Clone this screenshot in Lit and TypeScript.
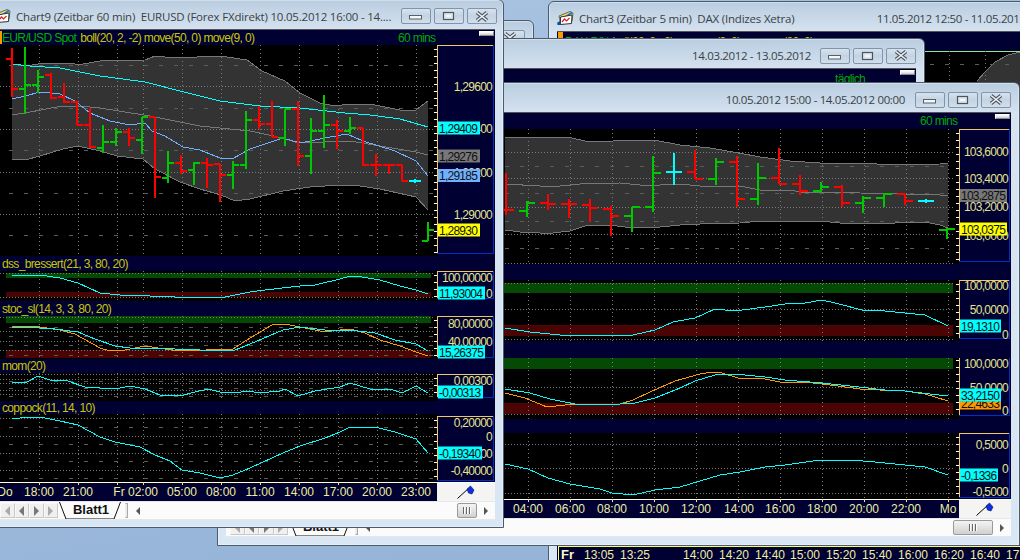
import { LitElement, css, html, svg } from 'lit';
import { customElement } from 'lit/decorators.js';

type Pt = [number, number];
type Bar = [number, number, number, number, number, string?];
type Label = [string, number, string?, number?];

interface Series {
  color: string;
  pts: Pt[];
}

interface Pane {
  top: number;
  bottom: number;
  strip: number;
  title?: unknown;
  box: Pt;
  bands?: [number, number, string][];
  dots?: number[];
  dashes?: number[];
  area?: { up: Pt[]; down: Pt[]; mid: Pt[] };
  lines?: Series[];
  bars?: Bar[];
  labels?: Label[];
}

interface Chart {
  x0: number;
  plotW: number;
  axisW: number;
  textRight: number;
  tick: number;
  grid: number[];
  times: [string, number][];
  axisH: number;
  panes: Pane[];
}

const R = '#ff0000';
const G = '#00c800';
const C = '#00ffff';
const CYAN = '#00ffff';
const ORANGE = '#ff9900';
const BLUE = '#70b0ff';

const pts = (list: Pt[]) => list.map((p) => p.join(',')).join(' ');

const eurBars: Bar[] = [
  [12, 47, 96, 58, 88, R], [25, 46, 113, 88, 84, G], [38, 69, 92, 84, 76, G], [51, 72, 98, 74, 97, R],
  [64, 82, 102, 96, 101, R], [77, 100, 124, 101, 124, R], [90, 107, 147, 124, 146, R], [103, 124, 152, 147, 141, G],
  [116, 127, 145, 141, 131, G], [129, 127, 145, 131, 137, R], [142, 116, 153, 139, 116, G], [155, 116, 197, 116, 176, R],
  [168, 150, 182, 177, 162, G], [181, 154, 173, 162, 170, R], [194, 161, 184, 169, 162, G], [207, 157, 187, 162, 164, R],
  [220, 163, 201, 163, 174, R], [233, 160, 188, 174, 164, G], [246, 110, 168, 164, 119, G], [259, 105, 128, 119, 123, R],
  [272, 100, 136, 123, 136, R], [285, 108, 145, 137, 108, G], [298, 100, 165, 108, 155, R], [311, 117, 173, 155, 130, G],
  [324, 94, 147, 130, 124, G], [337, 119, 148, 124, 130, R], [350, 116, 133, 130, 127, G], [363, 127, 165, 127, 164, R],
  [376, 153, 175, 164, 164, R], [389, 163, 173, 164, 164, R], [402, 164, 180, 164, 180, R], [415, 178, 182, 180, 180, C],
  [428, 221, 240, 240, 229, G],
];

const daxBars: Bar[] = [
  [506, 173, 215, 210, 210, R], [527, 201, 217, 211, 203, G], [548, 194, 210, 203, 204, R], [569, 199, 218, 204, 204, R],
  [590, 199, 222, 205, 208, R], [611, 206, 236, 209, 216, R], [632, 207, 232, 216, 207, G], [653, 156, 212, 207, 173, G],
  [674, 153, 185, 172, 172, C], [695, 150, 179, 172, 179, R], [716, 158, 185, 179, 162, G], [737, 156, 207, 162, 199, R],
  [758, 163, 205, 199, 178, G], [779, 148, 184, 178, 184, R], [800, 175, 195, 184, 191, R], [821, 182, 193, 191, 187, G],
  [842, 185, 207, 187, 203, R], [863, 196, 213, 203, 198, G], [884, 194, 207, 198, 194, G], [905, 194, 205, 194, 201, R],
  [926, 199, 203, 201, 201, C], [947, 228, 239, 230, 229, G],
];

const chart9: Chart = {
  x0: 0,
  plotW: 437,
  axisW: 58,
  textRight: 55,
  tick: 6,
  grid: [39, 78, 117, 143, 182, 221, 260, 299, 338, 377, 416],
  times: [['Do', 5], ['18:00', 39], ['21:00', 78], ['Fr', 119], ['02:00', 143], ['05:00', 182], ['08:00', 221], ['11:00', 260], ['14:00', 299], ['17:00', 338], ['20:00', 377], ['23:00', 416]],
  axisH: 19,
  panes: [
    {
      top: 44, bottom: 255, strip: 0, box: [44, 253],
      dots: [85, 128, 171, 213], dashes: [64, 107, 149, 192, 234],
      area: {
        up: [[12, 63], [25, 65], [45, 62], [72, 62], [78, 64], [100, 60], [145, 59], [155, 55], [175, 57], [220, 55], [247, 59], [262, 70], [285, 80], [300, 92], [320, 102], [335, 105], [350, 103], [375, 104], [400, 109], [416, 109], [428, 100]],
        down: [[12, 158], [25, 159], [40, 155], [63, 148], [78, 145], [100, 150], [117, 155], [143, 158], [155, 168], [180, 181], [200, 188], [221, 194], [235, 200], [250, 198], [283, 190], [310, 186], [340, 184], [360, 185], [380, 188], [416, 196], [428, 209]],
        mid: [[12, 114], [25, 112], [62, 105], [80, 105], [100, 107], [150, 115], [200, 125], [250, 130], [283, 137], [298, 142], [350, 140], [380, 145], [416, 151], [428, 154]],
      },
      lines: [
        { color: CYAN, pts: [[12, 63], [30, 65], [60, 67], [100, 75], [145, 81], [180, 90], [220, 100], [260, 105], [300, 107], [345, 112], [370, 114], [400, 118], [428, 126]] },
        { color: BLUE, pts: [[12, 98], [25, 95], [40, 91], [60, 93], [75, 100], [90, 112], [110, 120], [130, 124], [145, 122], [152, 130], [165, 135], [183, 146], [200, 149], [220, 157], [232, 158], [250, 148], [283, 137], [300, 142], [325, 137], [347, 133], [363, 140], [395, 150], [416, 160], [428, 175]] },
      ],
      bars: eurBars,
      labels: [['1,29600', 85], ['1,29400', 127], ['1,29200', 171], ['1,29000', 213], ['1,29409', 127, CYAN, 42], ['1,29276', 155, '#777777', 42], ['1,29185', 174.5, BLUE, 42], ['1,28930', 229, '#ffff00', 42]],
    },
    {
      top: 270, bottom: 300, strip: 15, title: 'dss_bressert(21, 3, 80, 20)', box: [270, 298],
      bands: [[272, 5, '#044a04'], [291, 5, '#4a0404']], dots: [272, 296],
      lines: [{ color: CYAN, pts: [[12, 274], [20, 275], [40, 274], [60, 277], [78, 282], [100, 292], [120, 294], [150, 295], [175, 296], [225, 296], [240, 293], [250, 291], [265, 289], [300, 285], [315, 284], [340, 278], [350, 275], [356, 275], [380, 279], [400, 285], [416, 289], [428, 293]] }],
      labels: [['100,00000', 276], ['0', 292], ['11,93004', 292, CYAN, 47]],
    },
    {
      top: 315, bottom: 358, strip: 15, title: 'stoc_sl(14, 3, 3, 80, 20)', box: [315, 357],
      bands: [[315, 7, '#044a04'], [349, 8, '#4a0404']], dots: [316, 330, 340, 349], dashes: [326, 335, 344, 354],
      lines: [
        { color: ORANGE, pts: [[12, 326], [20, 325], [40, 326], [60, 329], [75, 333], [100, 347], [110, 350], [125, 349], [145, 345], [165, 348], [180, 350], [233, 348], [250, 337], [272, 324], [285, 323], [300, 326], [325, 331], [340, 329], [350, 328], [365, 332], [380, 339], [400, 345], [416, 351], [428, 355]] },
        { color: CYAN, pts: [[12, 327], [30, 326], [40, 327], [55, 328], [78, 331], [95, 338], [115, 345], [130, 347], [150, 347], [175, 348], [200, 349], [235, 349], [250, 343], [283, 329], [300, 326], [325, 329], [350, 329], [375, 332], [395, 339], [416, 343], [428, 350]] },
      ],
      labels: [['80,00000', 322], ['40,00000', 340], ['15,26375', 351, CYAN, 47]],
    },
    {
      top: 372, bottom: 400, strip: 14, title: 'mom(20)', box: [373, 397],
      dots: [373, 378, 382, 389, 393], dashes: [380, 387, 395],
      lines: [{ color: CYAN, pts: [[12, 382], [27, 381], [38, 375], [50, 379], [65, 379], [85, 386], [115, 388], [130, 385], [145, 388], [160, 394], [180, 395], [195, 391], [208, 388], [220, 391], [233, 392], [250, 390], [258, 392], [280, 390], [285, 388], [298, 395], [315, 390], [340, 386], [350, 382], [370, 388], [383, 389], [390, 388], [402, 392], [416, 385], [428, 392]] }],
      labels: [['0,00300', 379], ['-0,00313', 391, CYAN, 45]],
    },
    {
      top: 413, bottom: 481, strip: 13, title: 'coppock(11, 14, 10)', box: [415, 480],
      dots: [417, 435, 452, 469], dashes: [426, 443, 460, 477],
      lines: [{ color: CYAN, pts: [[12, 418], [20, 417], [40, 416], [60, 420], [78, 424], [100, 436], [115, 441], [140, 446], [155, 454], [170, 460], [182, 469], [200, 472], [220, 477], [233, 474], [250, 467], [283, 452], [300, 445], [325, 437], [340, 431], [350, 426], [375, 426], [395, 431], [416, 438], [428, 452]] }],
      labels: [['0,20000', 421], ['0', 435], ['-0,20000', 452], ['-0,40000', 469], ['-0,19340', 452, CYAN, 44]],
    },
  ],
};

const dax: Chart = {
  x0: 226,
  plotW: 733,
  axisW: 52,
  textRight: 49,
  tick: 8,
  grid: [528, 570, 612, 654, 696, 738, 780, 822, 864, 906, 948],
  times: [['04:00', 528], ['06:00', 570], ['08:00', 612], ['10:00', 654], ['12:00', 696], ['14:00', 739], ['16:00', 780], ['18:00', 822], ['20:00', 864], ['22:00', 906], ['Mo', 948]],
  axisH: 19,
  panes: [
    {
      top: 129, bottom: 264, strip: 0, box: [129, 262],
      dots: [152, 178, 207, 234, 263], dashes: [166, 193, 221, 248],
      area: {
        up: [[505, 137], [560, 137], [572, 138], [585, 141], [613, 141], [622, 140], [654, 140], [680, 145], [710, 148], [739, 153], [760, 157], [790, 161], [820, 163], [853, 163], [900, 165], [940, 164], [948, 163]],
        down: [[505, 230], [520, 232], [540, 233], [553, 233], [570, 231], [585, 226], [590, 225], [608, 225], [625, 227], [660, 227], [680, 225], [700, 224], [740, 223], [760, 221], [810, 221], [830, 222], [840, 223], [895, 223], [905, 222], [925, 222], [940, 225], [948, 228]],
        mid: [[505, 184], [540, 186], [560, 186], [580, 184], [620, 183], [640, 185], [660, 185], [680, 184], [700, 186], [740, 186], [760, 190], [790, 190], [800, 192], [820, 192], [860, 193], [900, 194], [940, 195], [948, 196]],
      },
      bars: daxBars,
      labels: [['103,6000', 151], ['103,4000', 178], ['103,2000', 206], ['103,0000', 235], ['103,2875', 195.5, '#777777', 47], ['103,0375', 229, '#ffff00', 47]],
    },
    {
      top: 280, bottom: 341, strip: 16, box: [280, 339],
      bands: [[283, 10, '#044a04'], [325, 11, '#4a0404']], dots: [283, 309, 339],
      lines: [{ color: CYAN, pts: [[505, 328], [530, 332], [560, 335], [633, 335], [655, 330], [673, 322], [695, 318], [715, 309], [735, 311], [765, 307], [785, 304], [805, 303], [822, 300], [835, 303], [862, 310], [885, 311], [905, 313], [925, 315], [948, 326]] }],
      labels: [['100,0000', 285], ['50,0000', 309], ['0', 334], ['19,1310', 326, CYAN, 41]],
    },
    {
      top: 358, bottom: 419, strip: 17, box: [356, 416],
      bands: [[358, 11, '#044a04'], [403, 11, '#4a0404']], dots: [387, 414],
      lines: [
        { color: ORANGE, pts: [[505, 393], [525, 398], [547, 407], [565, 405], [620, 404], [633, 400], [650, 392], [675, 381], [700, 374], [712, 372], [722, 373], [738, 378], [765, 379], [780, 382], [805, 382], [830, 385], [860, 389], [880, 390], [905, 391], [925, 394], [948, 401]] },
        { color: CYAN, pts: [[505, 389], [530, 393], [550, 399], [575, 404], [620, 404], [635, 403], [655, 398], [680, 388], [695, 381], [715, 375], [735, 374], [765, 377], [785, 380], [822, 383], [850, 386], [885, 390], [905, 391], [930, 394], [948, 396]] },
      ],
      labels: [['100,0000', 363], ['50,0000', 387], ['0', 410], ['22,4633', 403, ORANGE, 41], ['33,2150', 395, CYAN, 41]],
    },
    {
      top: 433, bottom: 499, strip: 14, box: [433, 498],
      dots: [444, 468, 493],
      lines: [{ color: CYAN, pts: [[505, 464], [528, 469], [548, 478], [570, 484], [600, 489], [612, 493], [633, 495], [655, 490], [680, 487], [700, 481], [720, 475], [740, 472], [765, 467], [785, 465], [820, 460], [850, 460], [875, 462], [905, 465], [925, 467], [948, 475]] }],
      labels: [['0,5000', 444], ['0', 468], ['-0,5000', 491], ['-0,1336', 475, CYAN, 38]],
    },
  ],
};

@customElement('app-root')
export class AppRoot extends LitElement {
  static override styles = css`
    :host {
      display: block;
      position: relative;
      width: 1020px;
      height: 560px;
      overflow: hidden;
      background:
        linear-gradient(166deg, transparent 0, transparent 93%, rgba(255, 255, 255, 0.18) 94%, transparent 95%),
        linear-gradient(170deg, #a9c3e2 0%, #93b2d6 100%);
      font-family: 'Liberation Sans', Arial, sans-serif;
    }
    svg {
      display: block;
    }
    .win {
      position: absolute;
      box-sizing: border-box;
      padding: 0 8px 8px;
      border: 1px solid #4b5b6c;
      border-radius: 6px 6px 0 0;
      background: linear-gradient(180deg, #b9cde0 0, #d5e2f0 30px, #d9e6f3 100%);
      box-shadow: 0 0 0 1px rgba(255, 255, 255, 0.35) inset;
    }
    .w-back { left: 200px; top: 20px; width: 334px; height: 90px; }
    .w-c3 { left: 548px; top: 1px; width: 520px; height: 600px; }
    .w-2 { left: 217px; top: 38px; width: 708px; height: 90px; }
    .w-dax { left: 217px; top: 82px; width: 803px; height: 464px; }
    .w-eur { left: -9px; top: -1px; width: 513px; height: 529px; }

    .titlebar {
      display: flex;
      align-items: center;
      height: 29px;
      padding-top: 4px;
      box-sizing: border-box;
      font: 11.5px 'Open Sans', 'Noto Sans', sans-serif;
      letter-spacing: -0.2px;
      color: #3a3f46;
      white-space: pre;
    }
    .w-eur .titlebar { padding-top: 3px; }
    .icon { margin-right: 5px; flex: none; }
    .w-eur .icon { margin-left: -6px; }
    .range { margin-left: auto; margin-right: 7px; letter-spacing: -0.35px; }
    .w-c3 .range { margin-right: 3px; }
    .w-2 .range { margin-right: 6px; }
    .btn {
      display: flex;
      flex: none;
      align-items: center;
      justify-content: center;
      box-sizing: border-box;
      width: 30px;
      height: 16px;
      margin-left: 3px;
      border: 1px solid #8294a8;
      border-radius: 2px;
      background: linear-gradient(180deg, #d6e2ee 0, #c4d3e3 50%, #d2deeb 100%);
    }
    .client {
      border-top: 1px solid #555;
      background: #000033;
    }
    .strip {
      position: relative;
      display: flex;
      align-items: center;
      box-sizing: border-box;
      background: #000033;
      padding-left: 2px;
      font-size: 12px;
      letter-spacing: -0.65px;
      color: #c8c800;
      white-space: pre;
    }
    .green { color: #00b000; margin-right: 4px; }
    .marker {
      position: absolute;
      left: 0;
      top: 1px;
      bottom: 1px;
      width: 2px;
      background: #ff9900;
    }
    .mins {
      position: absolute;
      top: 1px;
      color: #00a800;
    }
    .w-eur .mins { left: 398px; }
    .w-dax .mins { left: 694px; }
    .w-2 .mins { left: 609px; top: 3px; }
    .closer {
      position: absolute;
      top: 1px;
      right: 1px;
      width: 15px;
      height: 5px;
      box-sizing: border-box;
      background: linear-gradient(180deg, #fff, #ccc);
      border: 1px solid #888;
      border-top-color: #fff;
      border-left-color: #fff;
    }
    .row {
      display: flex;
    }
    .axis-txt {
      font-size: 12px;
      letter-spacing: -0.75px;
      fill: #e4e48c;
      text-anchor: end;
    }
    .axis-txt.on {
      fill: #101010;
      text-anchor: start;
    }
    .time {
      font-size: 12px;
      fill: #eeeea0;
      text-anchor: middle;
    }
    .time.bold {
      font-size: 13px;
      font-weight: 700;
      fill: #f8f8d0;
      text-anchor: start;
    }
    .flag {
      display: flex;
      align-items: center;
      justify-content: center;
      flex: 1;
      background: #f4f4f2;
      border-top: 1px solid #fff;
    }
    .tabs {
      display: flex;
      align-items: center;
      height: 19px;
      background: #fbfbfb;
      box-sizing: border-box;
      border-top: 1px solid #e8e8e8;
      border-bottom: 1px solid #e4e8ec;
    }
    .w-dax .tabs { padding-left: 4px; }
    .nav {
      display: flex;
      align-items: center;
      justify-content: center;
      width: 14.5px;
      height: 15px;
      box-sizing: border-box;
      border: 1px solid #c8c8c8;
      border-top-color: #f8f8f8;
      border-left-color: #f8f8f8;
      background: #f0f0f0;
    }
    .tab {
      position: relative;
      width: 64px;
      height: 17px;
      margin-left: 1px;
      font-size: 13px;
      font-weight: 700;
      line-height: 16px;
      text-align: center;
      color: #111;
    }
    .tab svg {
      position: absolute;
      left: 0;
      top: 0;
    }
    .tab-end {
      width: 3px;
      height: 15px;
      margin-left: 2px;
      box-sizing: border-box;
      border: 1px solid #aaa;
      border-left-color: #eee;
      background: #e8e8e8;
    }
    .scroll-left { margin-left: 8px; }
    .thumb {
      display: flex;
      align-items: center;
      justify-content: center;
      gap: 1px;
      box-sizing: border-box;
      width: 20px;
      height: 15px;
      margin-left: auto;
      border: 1px solid #9a9a9a;
      border-radius: 2px;
      background: linear-gradient(180deg, #f4f4f4, #d0d0d0);
    }
    .w-dax .thumb { width: 40px; }
    .thumb i {
      display: block;
      width: 1px;
      height: 7px;
      background: #666;
      box-shadow: 1px 0 0 #fff;
      margin-right: 1px;
    }
    .scroll-right { width: 18px; display: flex; justify-content: center; }
    .c3-head {
      height: 19px;
      padding-left: 1px;
      align-items: flex-start;
    }
    .c3-marker {
      width: 5px;
      height: 100%;
      background: #ff9900;
      margin-right: 2px;
    }
    .c3-text { padding-top: 3px; }
  `;

  private renderIcon() {
    return html`<svg class="icon" width="17" height="15" viewBox="0 0 17 15">
      <path d="M2 5 L13 0.5 L16 2 L15 10 L4 13 Z" fill="#f0dc70" stroke="#6b6b3a" />
      <path d="M1 13.5 L4 9 L15 1.5" fill="none" stroke="#1a78d8" stroke-width="2" />
      <path d="M3.5 6 L15 4 L14.5 12.5 L3.5 13.5 Z" fill="#fff" stroke="#333" />
      <path d="M5 11 L7.5 8 L9.5 10 L12.5 7" fill="none" stroke="#e02020" stroke-width="1.2" />
      <rect x="0.5" y="11" width="3.5" height="3" fill="#14508f" />
    </svg>`;
  }

  private renderButtons() {
    return html`
      <div class="btn"><svg width="16" height="8" viewBox="0 0 16 8"><rect x="1.5" y="3.5" width="12" height="3.5" fill="#f4f7fa" stroke="#55606c" /></svg></div>
      <div class="btn"><svg width="14" height="10" viewBox="0 0 14 10"><rect x="1.5" y="1.5" width="10" height="7" fill="#dbe5ef" stroke="#4a5560" stroke-width="1.2" /><rect x="4" y="4" width="5" height="2" fill="#f4f7fa" /></svg></div>
      <div class="btn"><svg width="16" height="11" viewBox="0 0 16 11"><path d="M3 1.5 L13 9.5 M13 1.5 L3 9.5" stroke="#4a5560" stroke-width="3.6" /><path d="M3 1.5 L13 9.5 M13 1.5 L3 9.5" stroke="#f0f4f8" stroke-width="1.6" /></svg></div>
    `;
  }

  private renderPlot(c: Chart, p: Pane) {
    const h = p.bottom - p.top;
    const area = p.area;
    const end = c.x0 + c.plotW;
    return svg`<svg width=${c.plotW} height=${h} viewBox="${c.x0} ${p.top} ${c.plotW} ${h}" shape-rendering="crispEdges">
      <rect x=${c.x0} y=${p.top} width=${c.plotW} height=${h} fill="#000" />
      ${(p.bands ?? []).map(([y, bh, col]) => svg`<rect x=${c.x0 + 6} y=${y} width=${c.plotW - 12} height=${bh} fill=${col} />`)}
      ${area ? svg`<polygon points=${pts([...area.up, ...[...area.down].reverse()])} fill="#333333" />` : ''}
      ${c.grid.map((x) => svg`<line x1=${x + 0.5} x2=${x + 0.5} y1=${p.top} y2=${p.bottom} stroke="#7a7a7a" stroke-dasharray="1 3" />`)}
      ${(p.dots ?? []).map((y) => svg`<line x1=${c.x0} x2=${end - 4} y1=${y + 0.5} y2=${y + 0.5} stroke="#7a7a7a" stroke-dasharray="1 2" />`)}
      ${(p.dashes ?? []).map((y) => svg`<line x1=${c.x0 + 9} x2=${end - 4} y1=${y + 0.5} y2=${y + 0.5} stroke="#5c5c5c" stroke-dasharray="4 11" />`)}
      ${area
        ? svg`<polyline points=${pts(area.up)} fill="none" stroke="#777" /><polyline points=${pts(area.down)} fill="none" stroke="#777" /><polyline points=${pts(area.mid)} fill="none" stroke="#777" />`
        : ''}
      ${(p.lines ?? []).map((l) => svg`<polyline points=${pts(l.pts)} fill="none" stroke=${l.color} />`)}
      ${(p.bars ?? []).map(([x, hi, lo, open, close, col]) => svg`<path d="M${x} ${hi}V${lo}M${x - c.tick} ${open}H${x}M${x} ${close}H${x + c.tick}" fill="none" stroke=${col} stroke-width="2" />`)}
      ${this.renderTicks(end, p)}
    </svg>`;
  }

  private renderTicks(end: number, p: Pane) {
    const ticks: number[] = [];
    for (let y = p.box[0] + 4; y < p.box[1] - 1; y += 7) ticks.push(y);
    return ticks.map((y) => svg`<line x1=${end - 3} x2=${end} y1=${y + 0.5} y2=${y + 0.5} stroke="#fff" />`);
  }

  private renderAxis(c: Chart, p: Pane) {
    const h = p.bottom - p.top;
    const w = c.axisW;
    return svg`<svg width=${w} height=${h} viewBox="0 ${p.top} ${w} ${h}">
      <rect x="0" y=${p.box[0]} width="1" height=${p.box[1] - p.box[0]} fill="#f0c860" />
      <rect x="0" y=${p.box[0]} width=${w - 2} height="1" fill="#f0c860" />
      <rect x="0" y=${p.box[1] - 1} width=${w - 1} height="1" fill="#0030c0" />
      <rect x=${w - 2} y=${p.box[0]} width="1" height=${p.box[1] - p.box[0]} fill="#0030c0" />
      ${(p.labels ?? []).map(([text, y, bg, bw]) =>
        bg
          ? svg`<rect x="1" y=${y - 6.5} width=${bw} height="13" fill=${bg} /><text class="axis-txt on" x="2" y=${y + 4.5}>${text}</text>`
          : svg`<text class="axis-txt" x=${c.textRight} y=${y + 4.5}>${text}</text>`,
      )}
    </svg>`;
  }

  private renderPane(c: Chart, p: Pane) {
    return html`
      ${p.strip ? html`<div class="strip" style="height:${p.strip}px">${p.title ?? ''}</div>` : ''}
      <div class="row">${this.renderPlot(c, p)}${this.renderAxis(c, p)}</div>
    `;
  }

  private renderTimeRow(c: Chart) {
    const w = c.plotW;
    const h = c.axisH;
    return html`<div class="row">
      <svg width=${w} height=${h} viewBox="${c.x0} 0 ${w} ${h}">
        <rect x=${c.x0} y="0" width=${w} height=${h} fill="#000033" />
        <rect x=${c.x0} y="0" width=${w} height="1" fill="#ffffd0" />
        ${c.grid.map((x) => svg`<rect x=${x} y="0" width="1" height="3" fill="#ffe080" />`)}
        ${c.times.map(([t, x]) => svg`<text class="time" x=${x} y="14">${t}</text>`)}
      </svg>
      <div class="flag">
        <svg width="18" height="14" viewBox="0 0 18 14">
          <path d="M0.5 13.5 L12 3" stroke="#000" fill="none" />
          <path d="M10 4 L13.5 1 L17 5 L15 9 L11.5 8 Z" fill="#1030e0" stroke="#00106a" stroke-width="0.6" />
        </svg>
      </div>
    </div>`;
  }

  private renderArrow(dir: 'l' | 'r', color = '#777', size = 5) {
    const d = dir === 'l' ? `M${size} 0 L0 ${size} L${size} ${size * 2} Z` : `M0 0 L${size} ${size} L0 ${size * 2} Z`;
    return html`<svg width=${size} height=${size * 2} viewBox="0 0 ${size} ${size * 2}"><path d=${d} fill=${color} /></svg>`;
  }

  private renderTabs() {
    return html`<div class="tabs">
      <div class="nav">${this.renderArrow('l', '#aaa')}</div>
      <div class="nav">${this.renderArrow('l')}</div>
      <div class="nav">${this.renderArrow('r')}</div>
      <div class="nav">${this.renderArrow('r', '#aaa')}</div>
      <div class="tab">
        <svg width="64" height="17" viewBox="0 0 64 17"><path d="M0.5 0 L7 17 H55 L61.5 0" fill="none" stroke="#111" /></svg>
        Blatt1
      </div>
      <div class="tab-end"></div>
      <div class="scroll-left">${this.renderArrow('l', '#555', 4)}</div>
      <div class="thumb"><i></i><i></i><i></i></div>
      <div class="scroll-right">${this.renderArrow('r', '#555', 4)}</div>
    </div>`;
  }

  private renderChart(c: Chart) {
    return html`${c.panes.map((p) => this.renderPane(c, p))}${this.renderTimeRow(c)}${this.renderTabs()}`;
  }

  private renderChart3() {
    const times: [string, number][] = [['13:05', 599], ['13:25', 635], ['14:00', 698], ['14:20', 734], ['14:40', 770], ['15:00', 805], ['15:20', 841], ['15:40', 877], ['16:00', 913], ['16:20', 949], ['16:40', 985], ['17:00', 1021]];
    const w = 500;
    return html`
      <div class="strip c3-head"><span class="c3-marker"></span><span class="c3-text"><span class="green">DAX P/N</span>boll(20, 2, -2)      move(9, 0)      move(20, 0)</span></div>
      <svg width=${w} height="495" viewBox="557 52 ${w} 495" shape-rendering="crispEdges">
        <rect x="557" y="52" width=${w} height="495" fill="#000" />
        <rect x="557" y="52" width=${w} height="1" fill="#90e890" />
        <path d="M977 82 L985 73 L995 63 L1008 56 L1020 53 V100 H977 Z" fill="#333" />
        <path d="M977 82 L985 73 L995 63 L1008 56 L1020 53" fill="none" stroke="#777" />
        ${[949, 985].map((x) => svg`<line x1=${x + 0.5} x2=${x + 0.5} y1="52" y2="100" stroke="#7a7a7a" stroke-dasharray="1 3" />`)}
        <line x1="930" x2="1020" y1="65.5" y2="65.5" stroke="#5c5c5c" stroke-dasharray="4 11" />
      </svg>
      <svg width=${w} height="14" viewBox="557 546 ${w} 14">
        <rect x="558" y="546" width=${w} height="14" fill="#000033" />
        <rect x="558" y="546" width=${w} height="1" fill="#ffff60" />
        <rect x="558" y="546" width="1" height="14" fill="#ffff60" />
        <text class="time bold" x="561" y="559">Fr</text>
        ${times.map(([t, x]) => svg`<text class="time" x=${x} y="559">${t}</text>`)}
      </svg>
    `;
  }

  override render() {
    return html`
      <div class="win w-back">
        <div class="titlebar"><span class="range"></span>${this.renderButtons()}</div>
      </div>

      <div class="win w-c3">
        <div class="titlebar">${this.renderIcon()}Chart3 (Zeitbar 5 min)  DAX (Indizes Xetra)<span class="range">11.05.2012 12:50 - 11.05.2012 17:10</span></div>
        <div class="client">${this.renderChart3()}</div>
      </div>

      <div class="win w-2">
        <div class="titlebar"><span class="range">14.03.2012 - 13.05.2012</span>${this.renderButtons()}</div>
        <div class="client">
          <div class="strip" style="height:20px"><span class="mins">täglich</span><span class="closer"></span></div>
        </div>
      </div>

      <div class="win w-dax">
        <div class="titlebar"><span class="range">10.05.2012 15:00 - 14.05.2012 00:00</span>${this.renderButtons()}</div>
        <div class="client">
          <div class="strip" style="height:16px"><span class="mins">60 mins</span><span class="closer"></span></div>
          ${this.renderChart(dax)}
        </div>
      </div>

      <div class="win w-eur">
        <div class="titlebar">${this.renderIcon()}Chart9 (Zeitbar 60 min)  EURUSD (Forex FXdirekt) 10.05.2012 16:00 - 14....<span class="range"></span>${this.renderButtons()}</div>
        <div class="client">
          <div class="strip" style="height:15px"><span class="marker"></span><span class="green">EUR/USD Spot</span><span>boll(20, 2, -2) move(50, 0) move(9, 0)</span><span class="mins">60 mins</span><span class="closer"></span></div>
          ${this.renderChart(chart9)}
        </div>
      </div>
    `;
  }
}
